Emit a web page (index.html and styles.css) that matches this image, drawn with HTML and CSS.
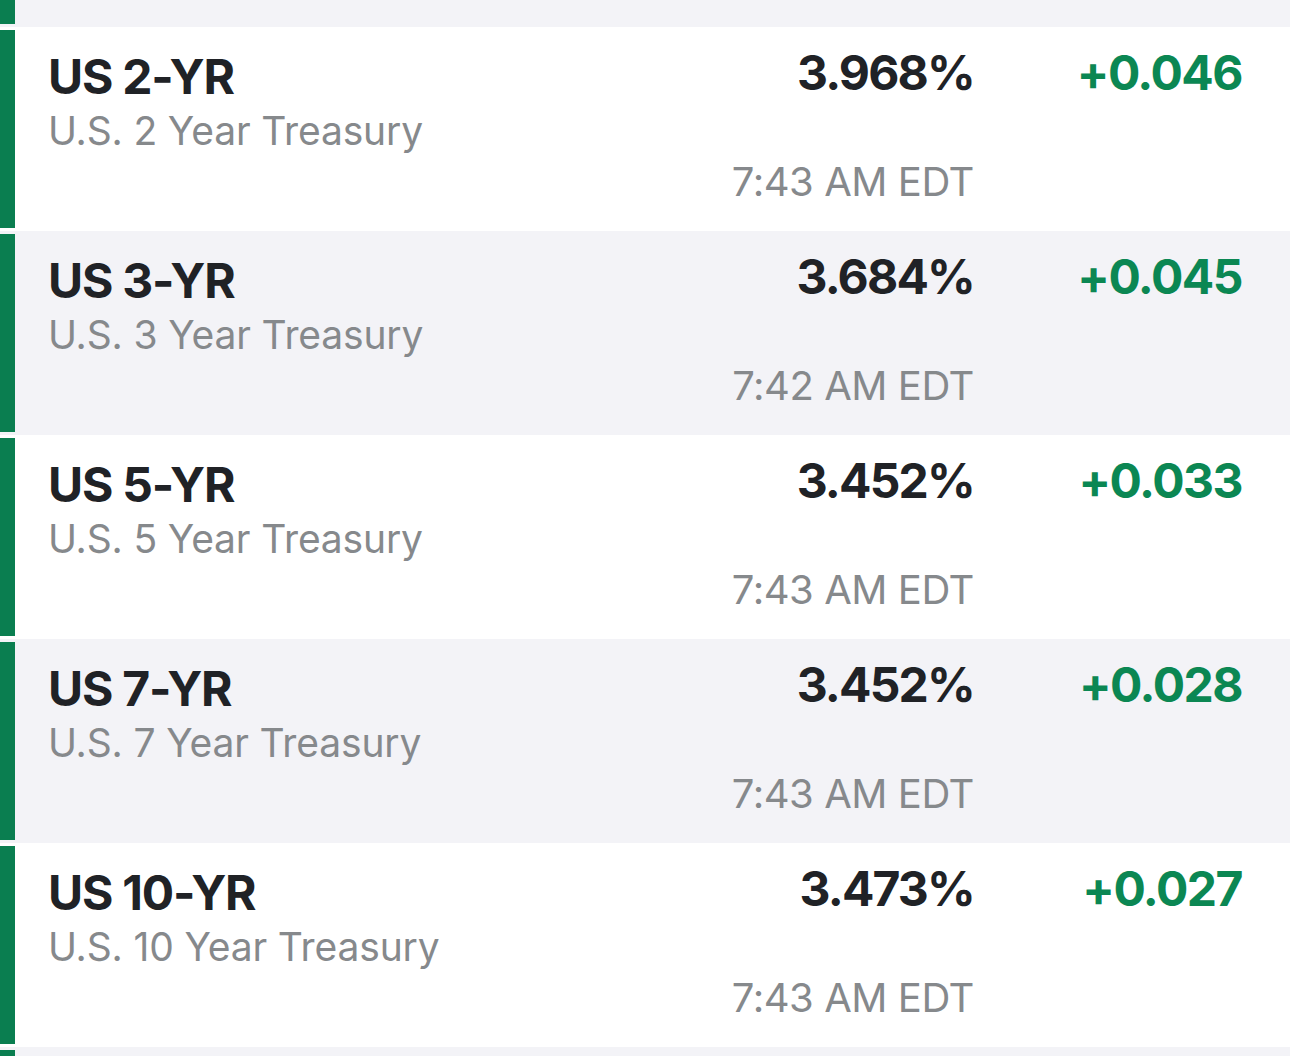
FILE: index.html
```html
<!DOCTYPE html>
<html>
<head>
<meta charset="utf-8">
<link rel="stylesheet" href="styles.css">
</head>
<body>
<div class="list">
  <div class="row row-alt row-top"><div class="bar"></div></div>
  <div class="row">
    <div class="bar"></div>
    <div class="info"><div class="sym">US 2-YR</div><div class="name">U.S. 2 Year Treasury</div></div>
    <div class="quote"><div class="price">3.968%</div><div class="time">7:43 AM EDT</div></div>
    <div class="change">+0.046</div>
  </div>
  <div class="row row-alt">
    <div class="bar"></div>
    <div class="info"><div class="sym">US 3-YR</div><div class="name">U.S. 3 Year Treasury</div></div>
    <div class="quote"><div class="price">3.684%</div><div class="time">7:42 AM EDT</div></div>
    <div class="change">+0.045</div>
  </div>
  <div class="row">
    <div class="bar"></div>
    <div class="info"><div class="sym">US 5-YR</div><div class="name">U.S. 5 Year Treasury</div></div>
    <div class="quote"><div class="price">3.452%</div><div class="time">7:43 AM EDT</div></div>
    <div class="change">+0.033</div>
  </div>
  <div class="row row-alt">
    <div class="bar"></div>
    <div class="info"><div class="sym">US 7-YR</div><div class="name">U.S. 7 Year Treasury</div></div>
    <div class="quote"><div class="price">3.452%</div><div class="time">7:43 AM EDT</div></div>
    <div class="change">+0.028</div>
  </div>
  <div class="row">
    <div class="bar"></div>
    <div class="info"><div class="sym">US 10-YR</div><div class="name">U.S. 10 Year Treasury</div></div>
    <div class="quote"><div class="price">3.473%</div><div class="time">7:43 AM EDT</div></div>
    <div class="change">+0.027</div>
  </div>
  <div class="row row-alt row-bottom"><div class="bar"></div></div>
</div>
</body>
</html>
```
FILE: styles.css
```css
* { box-sizing: border-box; }
html, body { margin: 0; padding: 0; background: #ffffff; }
body { font-family: "Inter", "Liberation Sans", sans-serif; overflow: hidden; height: 1056px; }
.list { display: flex; flex-direction: column; }
.row {
  display: grid;
  grid-template-columns: 15px 1fr auto 268px;
  height: 204px;
  background: #ffffff;
  padding-right: 48px;
}
.row-alt { background: #f3f3f7; }
.row-top { height: 27px; }
.row-top .bar { margin: 0 0 3px; }
.row-bottom { height: 9px; }
.row-bottom .bar { margin: 3px 0 0; }
.bar { background: #0a7e50; margin: 3px 0; }
.info { padding: 24px 0 0 33px; }
.sym { font-size: 48px; font-weight: 700; line-height: 52px; color: #202226; letter-spacing: -1.2px; }
.name { font-size: 39px; font-weight: 400; line-height: 52px; color: #86898c; margin-top: 2px; letter-spacing: -0.15px; }
.quote { text-align: right; padding-top: 20px; }
.price { font-size: 48px; font-weight: 700; line-height: 52px; color: #202226; letter-spacing: -1.8px; }
.time { font-size: 40px; font-weight: 400; line-height: 52px; color: #86898c; margin-top: 57px; letter-spacing: -0.45px; }
.change { text-align: right; padding-top: 20px; font-size: 48px; font-weight: 700; line-height: 52px; color: #0b8753; letter-spacing: -1.5px; }
```
